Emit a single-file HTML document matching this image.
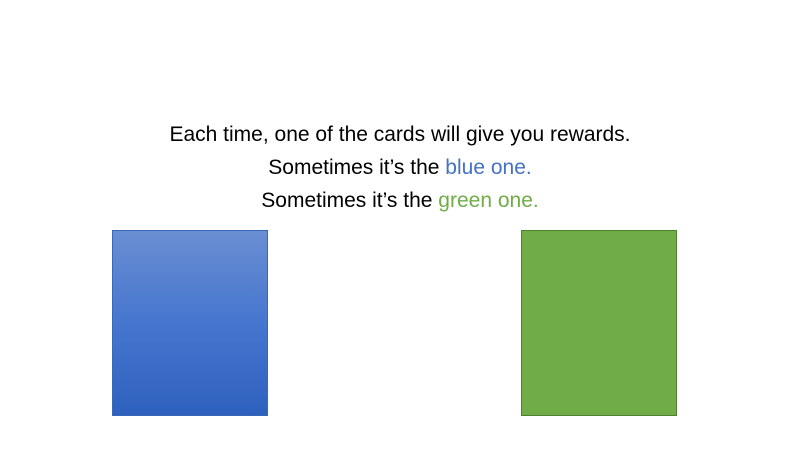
<!DOCTYPE html>
<html><head><style>
body{margin:0;width:800px;height:450px;background:#fff;overflow:hidden;position:relative;font-family:"Liberation Sans",sans-serif;}
.t{position:absolute;left:0;width:800px;text-align:center;font-size:21px;color:#000;line-height:24px}
.b{color:#4472c4}.g{color:#70ad47}
.c{position:absolute;top:230px;width:154px;height:184px}
</style></head><body>
<div class="t" style="top:123px">Each time, one of the cards will give you rewards.</div>
<div class="t" style="top:156px">Sometimes it’s the <span class="b">blue one.</span></div>
<div class="t" style="top:189px">Sometimes it’s the <span class="g">green one.</span></div>
<div class="c" style="left:112px;background:linear-gradient(#6a8ed2,#4676cf 50%,#2e61be);border:1px solid #3a68b8"></div>
<div class="c" style="left:521px;background:#70ad47;border:1px solid #507e32"></div>
</body></html>
